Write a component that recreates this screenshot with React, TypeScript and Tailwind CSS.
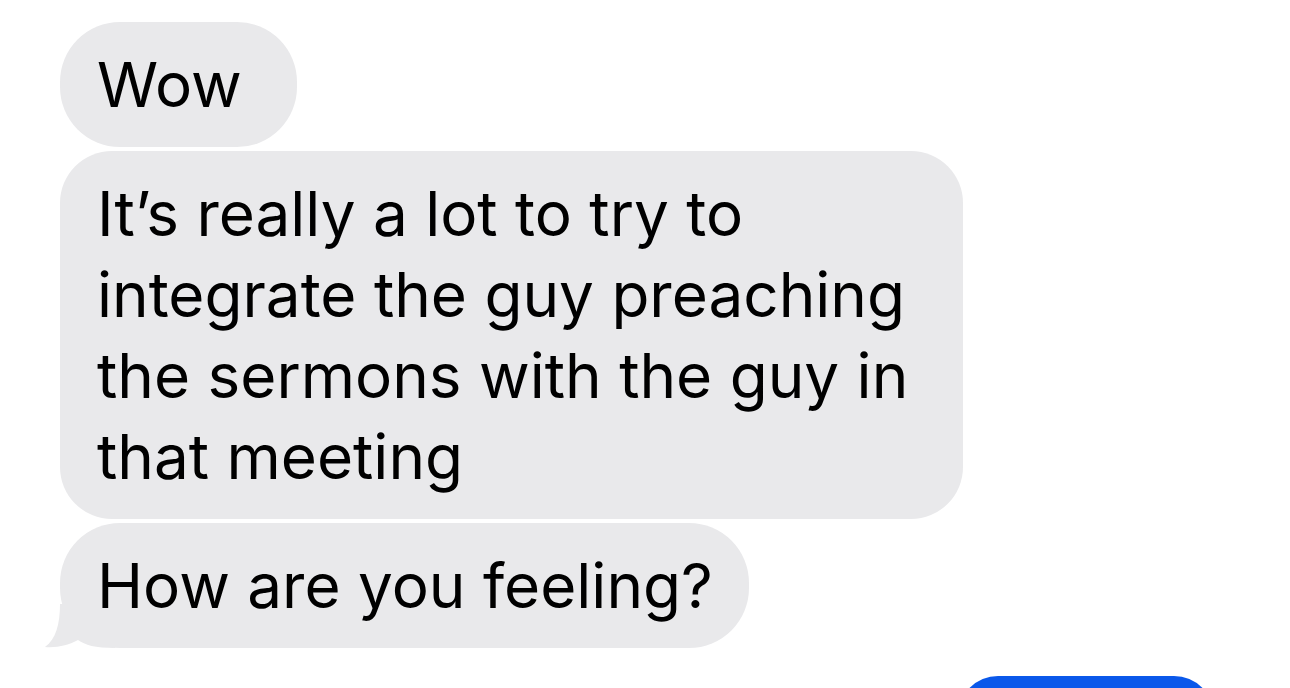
export default function App() {
  return (
    <div
      className="h-[688px] w-[1290px] overflow-hidden bg-white pl-[60px] pt-[22px] text-[62px] leading-[81px] text-black"
      style={{ fontFamily: "Inter, 'Noto Sans', sans-serif" }}
    >
      <div className="flex flex-col items-start gap-[4px]">
        <div className="rounded-[60px] bg-[#e9e9eb] py-[22px] pl-[37px] pr-[55px]">Wow</div>
        <div className="rounded-[52px] bg-[#e9e9eb] py-[22px] pl-[37px] pr-[55px]">
          It’s really a lot to try to
          <br />
          integrate the guy preaching
          <br />
          the sermons with the guy in
          <br />
          that meeting
        </div>
        <div className="relative rounded-[60px] bg-[#e9e9eb] py-[22px] pl-[37px] pr-[36px]">
          <span className="relative z-10">How are you feeling?</span>
          <svg className="absolute -left-[15px] bottom-0" width="70" height="44" viewBox="0 0 70 44">
            <path
              d="M15 0 C15 20 11 35 0 43 C12 44 24 41 33 36 C40 41 50 44 70 44 L70 0 Z"
              fill="#e9e9eb"
            />
          </svg>
        </div>
      </div>
      <div className="mt-[28px] flex justify-end pr-[76px]">
        <div className="h-[80px] w-[256px] rounded-[60px] bg-[#0a58ea]" />
      </div>
    </div>
  );
}
